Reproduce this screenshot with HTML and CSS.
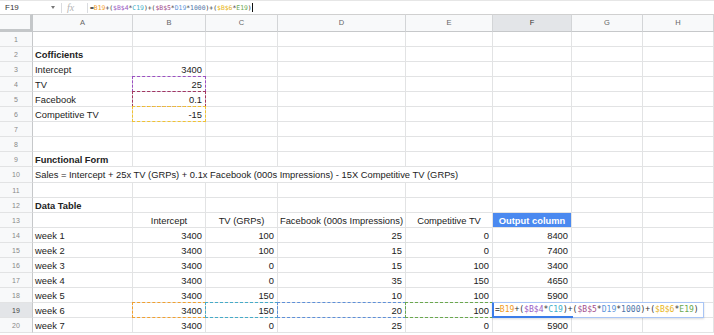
FILE: index.html
```html
<!DOCTYPE html>
<html lang="en">
<head>
  <meta charset="UTF-8">
  <meta name="viewport" content="width=device-width, initial-scale=1.0">
  <title>Sales model</title>
  <link rel="stylesheet" href="styles.css">
</head>
<body>

  <div class="formula-bar">
    <div class="name-box"><span>F19</span><span class="caret"></span></div>
    <div class="fx">fx</div>
    <div class="formula">=<span class="f-orange">B19</span>+(<span class="f-purple">$B$4</span>*<span class="f-teal">C19</span>)+(<span class="f-plum">$B$5</span>*<span class="f-blue">D19</span>*<span class="f-num">1000</span>)+(<span class="f-yellow">$B$6</span>*<span class="f-green">E19</span>)<span class="cursor"></span></div>
  </div>

  <div class="sheet">
    <div class="corner"></div>
    <div class="ch">A</div><div class="ch">B</div><div class="ch">C</div><div class="ch">D</div>
    <div class="ch">E</div><div class="ch sel">F</div><div class="ch">G</div><div class="ch">H</div>

    <div class="rh">1</div>
    <div class="c"></div><div class="c"></div><div class="c"></div><div class="c"></div>
    <div class="c"></div><div class="c"></div><div class="c"></div><div class="c"></div>

    <div class="rh">2</div>
    <div class="c b">Cofficients</div><div class="c"></div><div class="c"></div><div class="c"></div>
    <div class="c"></div><div class="c"></div><div class="c"></div><div class="c"></div>

    <div class="rh">3</div>
    <div class="c">Intercept</div><div class="c n">3400</div><div class="c"></div><div class="c"></div>
    <div class="c"></div><div class="c"></div><div class="c"></div><div class="c"></div>

    <div class="rh">4</div>
    <div class="c">TV</div><div class="c n ref ref-purple">25</div><div class="c"></div><div class="c"></div>
    <div class="c"></div><div class="c"></div><div class="c"></div><div class="c"></div>

    <div class="rh">5</div>
    <div class="c">Facebook</div><div class="c n ref ref-plum">0.1</div><div class="c"></div><div class="c"></div>
    <div class="c"></div><div class="c"></div><div class="c"></div><div class="c"></div>

    <div class="rh">6</div>
    <div class="c">Competitive TV</div><div class="c n ref ref-yellow">-15</div><div class="c"></div><div class="c"></div>
    <div class="c"></div><div class="c"></div><div class="c"></div><div class="c"></div>

    <div class="rh">7</div>
    <div class="c"></div><div class="c"></div><div class="c"></div><div class="c"></div>
    <div class="c"></div><div class="c"></div><div class="c"></div><div class="c"></div>

    <div class="rh">8</div>
    <div class="c"></div><div class="c"></div><div class="c"></div><div class="c"></div>
    <div class="c"></div><div class="c"></div><div class="c"></div><div class="c"></div>

    <div class="rh">9</div>
    <div class="c b">Functional Form</div><div class="c"></div><div class="c"></div><div class="c"></div>
    <div class="c"></div><div class="c"></div><div class="c"></div><div class="c"></div>

    <div class="rh">10</div>
    <div class="c span5">Sales = Intercept + 25x TV (GRPs) + 0.1x Facebook (000s Impressions) - 15X Competitive TV (GRPs)</div>
    <div class="c"></div><div class="c"></div><div class="c"></div>

    <div class="rh">11</div>
    <div class="c"></div><div class="c"></div><div class="c"></div><div class="c"></div>
    <div class="c"></div><div class="c"></div><div class="c"></div><div class="c"></div>

    <div class="rh">12</div>
    <div class="c b">Data Table</div><div class="c"></div><div class="c"></div><div class="c"></div>
    <div class="c"></div><div class="c"></div><div class="c"></div><div class="c"></div>

    <div class="rh">13</div>
    <div class="c"></div><div class="c ctr">Intercept</div><div class="c ctr">TV (GRPs)</div><div class="c ctr">Facebook (000s Impressions)</div>
    <div class="c ctr">Competitive TV</div><div class="c ctr out">Output column</div><div class="c"></div><div class="c"></div>

    <div class="rh">14</div>
    <div class="c">week 1</div><div class="c n">3400</div><div class="c n">100</div><div class="c n">25</div>
    <div class="c n">0</div><div class="c n">8400</div><div class="c"></div><div class="c"></div>

    <div class="rh">15</div>
    <div class="c">week 2</div><div class="c n">3400</div><div class="c n">100</div><div class="c n">15</div>
    <div class="c n">0</div><div class="c n">7400</div><div class="c"></div><div class="c"></div>

    <div class="rh">16</div>
    <div class="c">week 3</div><div class="c n">3400</div><div class="c n">0</div><div class="c n">15</div>
    <div class="c n">100</div><div class="c n">3400</div><div class="c"></div><div class="c"></div>

    <div class="rh">17</div>
    <div class="c">week 4</div><div class="c n">3400</div><div class="c n">0</div><div class="c n">35</div>
    <div class="c n">150</div><div class="c n">4650</div><div class="c"></div><div class="c"></div>

    <div class="rh">18</div>
    <div class="c">week 5</div><div class="c n">3400</div><div class="c n">150</div><div class="c n">10</div>
    <div class="c n">100</div><div class="c n">5900</div><div class="c"></div><div class="c"></div>

    <div class="rh sel">19</div>
    <div class="c">week 6</div><div class="c n ref ref-orange">3400</div><div class="c n ref ref-teal">150</div><div class="c n ref ref-blue">20</div>
    <div class="c n ref ref-green">100</div>
    <div class="c active">
      <div class="editor">=<span class="f-orange">B19</span>+(<span class="f-purple">$B$4</span>*<span class="f-teal">C19</span>)+(<span class="f-plum">$B$5</span>*<span class="f-blue">D19</span>*<span class="f-num">1000</span>)+(<span class="f-yellow">$B$6</span>*<span class="f-green">E19</span>)</div>
    </div>
    <div class="c"></div><div class="c"></div>

    <div class="rh">20</div>
    <div class="c">week 7</div><div class="c n">3400</div><div class="c n">0</div><div class="c n">25</div>
    <div class="c n">0</div><div class="c n">5900</div><div class="c"></div><div class="c"></div>
  </div>

</body>
</html>
```

FILE: styles.css
```css
* {
  box-sizing: border-box;
}
body {
  margin: 0;
  width: 714px;
  height: 335px;
  overflow: hidden;
  background-color: #fff;
  font-family: "Liberation Sans", Arial, sans-serif;
  color: #222;
}

/* formula bar */
.formula-bar {
  height: 14px;
  display: flex;
  align-items: center;
  border-top: 1px solid #e6e6e6;
  font-size: 8px;
  color: #333;
}
.name-box {
  width: 62px;
  height: 10px;
  display: flex;
  align-items: center;
  justify-content: space-between;
  padding: 0 6px 0 5px;
  border-right: 1px solid #dadce0;
}
.caret {
  width: 0;
  height: 0;
  border-left: 2.5px solid transparent;
  border-right: 2.5px solid transparent;
  border-top: 3px solid #777;
}
.fx {
  width: 26px;
  height: 10px;
  line-height: 10px;
  padding-left: 5px;
  border-right: 1px solid #dadce0;
  font-family: "Liberation Serif", serif;
  font-style: italic;
  font-size: 10px;
  color: #b5b5b5;
}
.formula {
  display: flex;
  align-items: center;
  padding-left: 2px;
  font-family: "DejaVu Sans Mono", "Liberation Mono", monospace;
  font-size: 6.4px;
  color: #333;
  white-space: pre;
}
.cursor {
  width: 1px;
  height: 9px;
  background-color: #111;
}

/* formula reference colours */
.f-orange { color: #f29b1d; }
.f-purple { color: #9b5cc4; }
.f-teal { color: #3fb0c9; }
.f-plum { color: #a4508e; }
.f-blue { color: #5b95db; }
.f-num { color: #4d74a8; }
.f-yellow { color: #e8b51c; }
.f-green { color: #6aa84f; }

/* grid */
.sheet {
  display: grid;
  grid-template-columns: 33px 100px 73px 72px 128px 87px 79px 71px 71px;
  grid-template-rows: 17.6px;
  grid-auto-rows: 15.1px;
  font-size: 9.35px;
}
.corner {
  background-color: #f8f9fa;
  border-right: 3px solid #c4c7c9;
  border-bottom: 3px solid #c4c7c9;
  border-top: 1px solid #d0d0d0;
}
.ch {
  background-color: #f8f9fa;
  border-right: 1px solid #d3d5d7;
  border-bottom: 1px solid #c6c8ca;
  border-top: 1px solid #d0d0d0;
  text-align: center;
  line-height: 16px;
  font-size: 7.5px;
  color: #666;
}
.ch.sel {
  background-color: #e3e5e8;
  color: #333;
}
.rh {
  background-color: #f8f9fa;
  border-right: 1px solid #c6c8ca;
  border-bottom: 1px solid #e2e3e4;
  text-align: center;
  padding-top: 1px;
  line-height: 14px;
  font-size: 7px;
  color: #888;
}
.rh.sel {
  background-color: #e3e5e8;
  color: #444;
}
.c {
  border-right: 1px solid #e2e3e4;
  border-bottom: 1px solid #e2e3e4;
  padding: 1px 3px 0 2px;
  line-height: 14px;
  white-space: nowrap;
}
.c.b {
  font-weight: bold;
}
.c.n {
  text-align: right;
}
.c.ctr {
  text-align: center;
  padding: 1px 0 0;
}
.c.span5 {
  grid-column: span 5;
}
.c.out {
  background-color: #4a89f0;
  color: #fff;
  font-weight: bold;
}

/* dashed reference ranges */
.ref {
  position: relative;
}
.ref::after {
  content: "";
  position: absolute;
  left: -1px;
  top: -1px;
  right: -1px;
  bottom: -1px;
  border: 1px dashed #999;
}
.ref-purple::after { border-color: #9b4fc2; }
.ref-plum::after { border-color: #a3385f; }
.ref-yellow::after { border-color: #f1c232; }
.ref-orange::after { border-color: #f0a030; }
.ref-teal::after { border-color: #46abc8; }
.ref-blue::after { border-color: #5d8fd8; }
.ref-green::after { border-color: #6aa84f; }

/* active cell editor */
.active {
  position: relative;
  padding: 0;
}
.editor {
  position: absolute;
  left: -1px;
  top: -1px;
  width: 212px;
  height: 16px;
  z-index: 2;
  background-color: #fff;
  border: 1px solid #a9c5f5;
  border-left: 2px solid #3b7de9;
  padding-left: 1px;
  line-height: 14px;
  font-family: "DejaVu Sans Mono", "Liberation Mono", monospace;
  font-size: 8.05px;
  color: #333;
  white-space: pre;
  box-shadow: 0 1px 2px rgba(0, 0, 0, 0.15);
}
.editor::after {
  content: "";
  position: absolute;
  left: -2px;
  bottom: -1px;
  width: 81px;
  height: 2px;
  background-color: #3b7de9;
}
```
